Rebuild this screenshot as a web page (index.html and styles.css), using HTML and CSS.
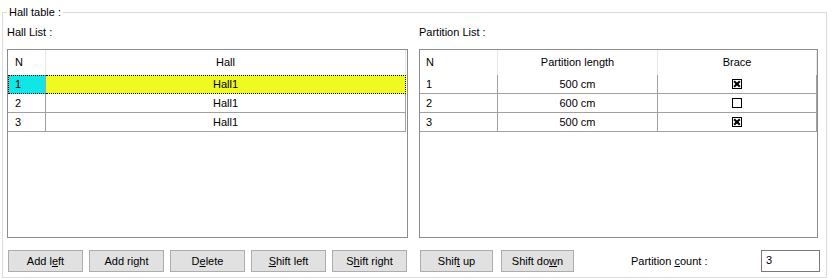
FILE: index.html
```html
<!DOCTYPE html>
<html lang="en">
<head>
    <meta charset="UTF-8">
    <title>Hall table</title>
    <link rel="stylesheet" href="styles.css">
</head>
<body>
    <fieldset class="group">
        <legend>Hall table :</legend>
        <div class="columns">
            <!-- Hall list -->
            <div class="column">
                <div class="caption">Hall List :</div>
                <div class="grid">
                    <table class="grid-table">
                        <colgroup>
                            <col style="width: 38px">
                            <col style="width: 360px">
                        </colgroup>
                        <thead>
                            <tr>
                                <th class="left">N</th>
                                <th>Hall</th>
                            </tr>
                        </thead>
                        <tbody>
                            <tr class="selected">
                                <td class="left cell-index">1</td>
                                <td class="cell-current">Hall1</td>
                            </tr>
                            <tr>
                                <td class="left">2</td>
                                <td>Hall1</td>
                            </tr>
                            <tr>
                                <td class="left">3</td>
                                <td>Hall1</td>
                            </tr>
                        </tbody>
                    </table>
                </div>
                <div class="actions">
                    <button type="button" class="button">Add l<u>e</u>ft</button>
                    <button type="button" class="button">Add ri<u>g</u>ht</button>
                    <button type="button" class="button">D<u>e</u>lete</button>
                    <button type="button" class="button"><u>S</u>hift left</button>
                    <button type="button" class="button">S<u>h</u>ift right</button>
                </div>
            </div>

            <!-- Partition list -->
            <div class="column">
                <div class="caption">Partition List :</div>
                <div class="grid grid-right">
                    <table class="grid-table">
                        <colgroup>
                            <col style="width: 78px">
                            <col style="width: 160px">
                            <col style="width: 159px">
                        </colgroup>
                        <thead>
                            <tr>
                                <th class="left">N</th>
                                <th>Partition length</th>
                                <th>Brace</th>
                            </tr>
                        </thead>
                        <tbody>
                            <tr>
                                <td class="left">1</td>
                                <td>500 cm</td>
                                <td><span class="check checked"></span></td>
                            </tr>
                            <tr>
                                <td class="left">2</td>
                                <td>600 cm</td>
                                <td><span class="check"></span></td>
                            </tr>
                            <tr>
                                <td class="left">3</td>
                                <td>500 cm</td>
                                <td><span class="check checked"></span></td>
                            </tr>
                        </tbody>
                    </table>
                </div>
                <div class="actions">
                    <button type="button" class="button button-small">Shif<u>t</u> up</button>
                    <button type="button" class="button button-small">Shift do<u>w</u>n</button>
                    <label class="count-label" for="partitionCount">Partition <u>c</u>ount :</label>
                    <input type="text" id="partitionCount" class="textbox" value="3">
                </div>
            </div>
        </div>
    </fieldset>
</body>
</html>
```

FILE: styles.css
```css
body {
    margin: 0;
    padding-top: 6px;
    background-color: #ffffff;
    font-family: "Liberation Sans", Arial, sans-serif;
    font-size: 11px;
    color: #000000;
}

.group {
    box-sizing: border-box;
    width: 825px;
    margin: 0 0 0 2px;
    padding: 6px 6px 5px 4px;
    border: 1px solid #dcdcdc;
}

.group legend {
    padding: 0 2px;
    line-height: 13px;
}

.columns {
    display: flex;
    gap: 11px;
}

.column {
    width: 401px;
}

.caption {
    line-height: 14px;
    margin-bottom: 10px;
}

.grid {
    box-sizing: border-box;
    width: 401px;
    height: 189px;
    border: 1px solid #8c8c8c;
    background-color: #ffffff;
}

.grid-right {
    width: 399px;
}

.grid-table {
    table-layout: fixed;
    border-collapse: separate;
    border-spacing: 0;
    width: auto;
}

.grid-table th,
.grid-table td {
    box-sizing: border-box;
    padding: 0 5px;
    text-align: center;
    font-weight: normal;
    white-space: nowrap;
}

.grid-table th {
    line-height: 25px;
    border-right: 1px solid #e8e8e8;
}

.grid-table td {
    line-height: 18px;
    border-right: 1px solid #a0a0a0;
    border-bottom: 1px solid #a0a0a0;
}

.grid-table .left {
    text-align: left;
    padding-left: 6px;
}

.grid .grid-table .left {
    padding-left: 7px;
}

.grid-right .grid-table .left {
    padding-left: 6px;
}

/* current row of the hall list */
.grid-table .selected td {
    line-height: 17px;
    border-top: 1px dotted #000000;
    border-bottom: 1px dotted #000000;
}

.grid-table .selected td:first-child {
    border-left: 1px dotted #000000;
    padding-left: 6px;
}

.grid-table .selected td:last-child {
    border-right: 1px dotted #000000;
}

.cell-index {
    background-color: #10e6e6;
}

.cell-current {
    background-color: #eefa20;
}

.check {
    display: inline-block;
    box-sizing: border-box;
    width: 10px;
    height: 10px;
    border: 1px solid #000000;
    vertical-align: -1px;
    position: relative;
}

.check.checked::before,
.check.checked::after {
    content: "";
    position: absolute;
    left: 0;
    top: 3px;
    width: 8px;
    height: 2px;
    background-color: #000000;
    transform: rotate(45deg);
}

.check.checked::after {
    transform: rotate(-45deg);
}

.actions {
    display: flex;
    align-items: center;
    gap: 6px;
    margin-top: 12px;
    padding-left: 1px;
}

.button {
    box-sizing: border-box;
    width: 75px;
    height: 22px;
    padding: 0;
    border: 1px solid #adadad;
    background-color: #e1e1e1;
    font-family: inherit;
    font-size: 11px;
    color: #000000;
}

.button-small {
    width: 73px;
    margin-right: 2px;
}

.count-label {
    margin-left: 49px;
    line-height: 14px;
}

.textbox {
    box-sizing: border-box;
    width: 59px;
    height: 22px;
    margin-left: auto;
    padding: 0 0 3px 4px;
    border: 1px solid #7a7a7a;
    font-family: inherit;
    font-size: 11px;
    color: #000000;
}
```
